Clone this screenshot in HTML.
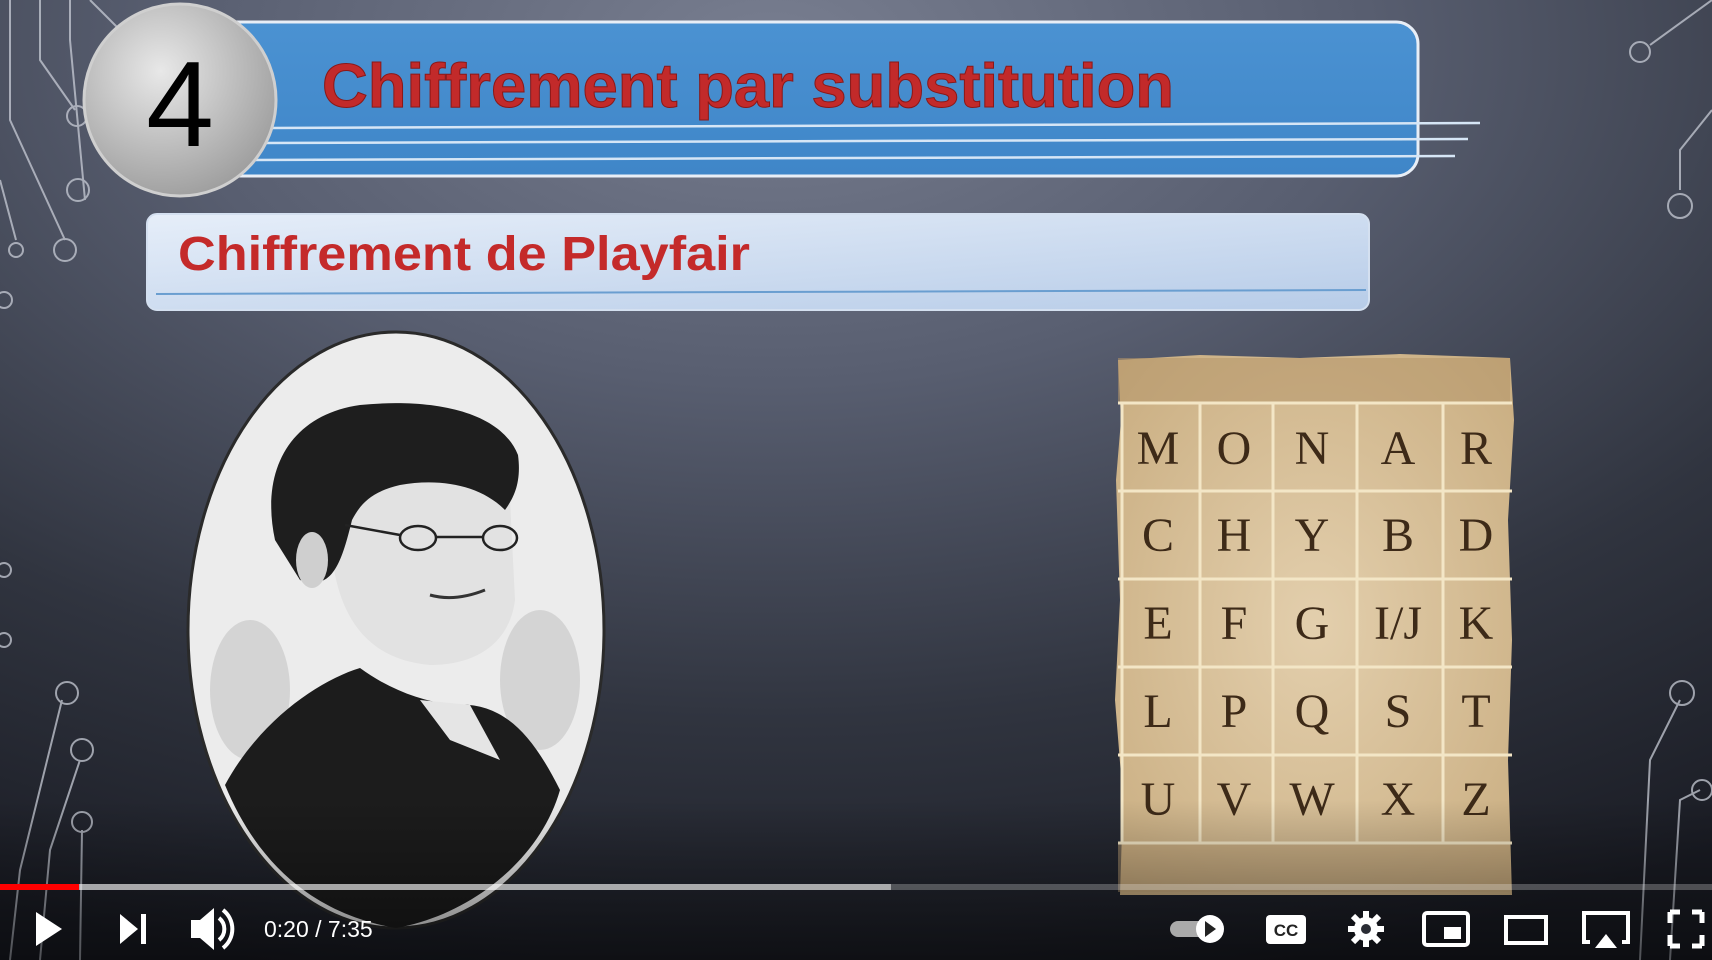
<!DOCTYPE html>
<html><head><meta charset="utf-8"><style>
html,body{margin:0;padding:0;width:1712px;height:960px;overflow:hidden;background:#3a3e4d}
svg{display:block}
</style></head><body>
<svg width="1712" height="960" viewBox="0 0 1712 960" xmlns="http://www.w3.org/2000/svg">
<defs>
<radialGradient id="bg" cx="0.45" cy="0.05" r="1.0">
<stop offset="0" stop-color="#787e90"/>
<stop offset="0.35" stop-color="#585e70"/>
<stop offset="0.7" stop-color="#30343f"/>
<stop offset="1" stop-color="#1a1c24"/>
</radialGradient>
<linearGradient id="blue" x1="0" y1="0" x2="0" y2="1">
<stop offset="0" stop-color="#4b92d2"/><stop offset="1" stop-color="#3f86c8"/>
</linearGradient>
<linearGradient id="sub" x1="0" y1="0" x2="1" y2="1">
<stop offset="0" stop-color="#e6eef9"/><stop offset="1" stop-color="#b7cce8"/>
</linearGradient>
<radialGradient id="circ" cx="0.4" cy="0.35" r="0.7">
<stop offset="0" stop-color="#e8e8e8"/><stop offset="1" stop-color="#9c9c9c"/>
</radialGradient>
<radialGradient id="parch" cx="0.5" cy="0.5" r="0.7">
<stop offset="0" stop-color="#e3cfad"/><stop offset="1" stop-color="#c9ad80"/>
</radialGradient>
<linearGradient id="ctrl" x1="0" y1="0" x2="0" y2="1">
<stop offset="0" stop-color="#000" stop-opacity="0"/><stop offset="1" stop-color="#000" stop-opacity="0.5"/>
</linearGradient>
</defs>
<rect width="1712" height="960" fill="url(#bg)"/>
<g stroke="#c8ccd6" stroke-width="2" fill="none" opacity="0.75">
<path d="M10 0 V120 L65 240"/><circle cx="65" cy="250" r="11"/>
<path d="M40 0 V60 L75 110"/><circle cx="77" cy="116" r="10"/>
<path d="M70 0 V40 L85 200"/><circle cx="78" cy="190" r="11"/>
<path d="M90 0 L120 30"/>
<path d="M0 180 L16 240"/><circle cx="16" cy="250" r="7"/>
<circle cx="4" cy="300" r="8"/>
<circle cx="4" cy="570" r="7"/><circle cx="4" cy="640" r="7"/>
<path d="M10 960 L20 870 L62 700"/><circle cx="67" cy="693" r="11"/>
<path d="M40 960 L50 850 L80 760"/><circle cx="82" cy="750" r="11"/>
<path d="M80 960 L82 830"/><circle cx="82" cy="822" r="10"/>
<path d="M1712 0 L1650 45"/><circle cx="1640" cy="52" r="10"/>
<path d="M1712 110 L1680 150 V190"/><circle cx="1680" cy="206" r="12"/>
<path d="M1640 960 L1650 760 L1680 700"/><circle cx="1682" cy="693" r="12"/>
<path d="M1670 960 L1680 800 L1700 790"/><circle cx="1702" cy="790" r="10"/>
</g>
<rect x="208" y="22" width="1210" height="154" rx="22" fill="url(#blue)" stroke="#e8eef6" stroke-width="3"/>
<g stroke="#d6e6f6" stroke-width="2.5">
<line x1="270" y1="128" x2="1480" y2="123"/>
<line x1="260" y1="143" x2="1468" y2="139"/>
<line x1="245" y1="160" x2="1455" y2="156"/>
</g>
<circle cx="180" cy="100" r="96" fill="url(#circ)" stroke="#cfcfcf" stroke-width="3"/>
<text x="180" y="146" font-family="Liberation Sans, sans-serif" font-size="122" fill="#000" text-anchor="middle">4</text>
<text x="322" y="107" font-family="Liberation Sans, sans-serif" font-weight="bold" font-size="62" fill="#c22a2a" stroke="#8a1818" stroke-width="1" textLength="852" lengthAdjust="spacingAndGlyphs">Chiffrement par substitution</text>
<rect x="147" y="214" width="1222" height="96" rx="10" fill="url(#sub)" stroke="#d4e0f0" stroke-width="2"/>
<line x1="156" y1="294" x2="1366" y2="290" stroke="#6a9ed0" stroke-width="2"/>
<text x="178" y="270" font-family="Liberation Sans, sans-serif" font-weight="bold" font-size="48" fill="#c42a2a" textLength="572" lengthAdjust="spacingAndGlyphs">Chiffrement de Playfair</text>
<ellipse cx="396" cy="630" rx="208" ry="298" fill="#ececec" stroke="#2a2a2a" stroke-width="3"/>
<ellipse cx="250" cy="690" rx="40" ry="70" fill="#c4c4c4" opacity="0.6"/>
<ellipse cx="540" cy="680" rx="40" ry="70" fill="#c4c4c4" opacity="0.6"/>
<path d="M330 520 C330 620 370 660 430 665 C480 665 510 640 515 600 L510 500 C480 470 410 470 370 480 C345 490 335 505 330 520 Z" fill="#e2e2e2"/>
<path d="M275 540 C260 470 290 415 360 405 C430 398 500 410 518 455 C522 485 512 500 505 510 C480 485 440 478 400 485 C370 492 360 505 352 520 C340 570 330 590 300 580 Z" fill="#1e1e1e"/>
<ellipse cx="312" cy="560" rx="16" ry="28" fill="#cfcfcf"/>
<g stroke="#222" stroke-width="2.5" fill="none"><ellipse cx="418" cy="538" rx="18" ry="12"/><ellipse cx="500" cy="538" rx="17" ry="12"/><path d="M345 525 L400 535 M436 537 L483 537"/></g>
<path d="M430 595 Q455 602 485 590" stroke="#333" stroke-width="3" fill="none"/>
<path d="M225 785 C260 720 320 680 360 668 C390 690 420 700 450 705 C500 700 530 730 560 790 C540 860 470 915 396 928 C320 915 260 870 225 785 Z" fill="#1c1c1c"/>
<path d="M420 700 L470 705 L500 760 L450 740 Z" fill="#e5e5e5"/>
<path d="M1118 360 L1200 355 L1300 358 L1400 354 L1510 358 L1514 420 L1508 520 L1512 640 L1508 760 L1512 895 L1120 895 L1123 800 L1115 700 L1120 600 L1116 480 L1121 420 Z" fill="url(#parch)"/>
<rect x="1118" y="358" width="392" height="44" fill="#b5956a" opacity="0.55"/>
<rect x="1118" y="844" width="392" height="48" fill="#c4a679" opacity="0.5"/>
<g stroke="#f3e6c6" stroke-width="3">
<line x1="1118" y1="403" x2="1512" y2="403"/><line x1="1118" y1="491" x2="1512" y2="491"/>
<line x1="1118" y1="579" x2="1512" y2="579"/><line x1="1118" y1="667" x2="1512" y2="667"/>
<line x1="1118" y1="755" x2="1512" y2="755"/><line x1="1118" y1="843" x2="1512" y2="843"/>
<line x1="1122" y1="403" x2="1122" y2="843"/><line x1="1200" y1="403" x2="1200" y2="843"/>
<line x1="1273" y1="403" x2="1273" y2="843"/><line x1="1357" y1="403" x2="1357" y2="843"/>
<line x1="1443" y1="403" x2="1443" y2="843"/>
</g>
<g font-family="Liberation Serif, serif" font-size="48" fill="#3d2a18" text-anchor="middle">
<text x="1158" y="464">M</text><text x="1234" y="464">O</text><text x="1312" y="464">N</text><text x="1398" y="464">A</text><text x="1476" y="464">R</text>
<text x="1158" y="551">C</text><text x="1234" y="551">H</text><text x="1312" y="551">Y</text><text x="1398" y="551">B</text><text x="1476" y="551">D</text>
<text x="1158" y="639">E</text><text x="1234" y="639">F</text><text x="1312" y="639">G</text><text x="1398" y="639">I/J</text><text x="1476" y="639">K</text>
<text x="1158" y="727">L</text><text x="1234" y="727">P</text><text x="1312" y="727">Q</text><text x="1398" y="727">S</text><text x="1476" y="727">T</text>
<text x="1158" y="815">U</text><text x="1234" y="815">V</text><text x="1312" y="815">W</text><text x="1398" y="815">X</text><text x="1476" y="815">Z</text>
</g>
<rect y="800" width="1712" height="160" fill="url(#ctrl)"/>
<rect x="0" y="884" width="1712" height="6" fill="#ffffff" opacity="0.25"/>
<rect x="0" y="884" width="891" height="6" fill="#ffffff" opacity="0.5"/>
<rect x="0" y="884" width="79" height="6" fill="#f00"/>
<g fill="#fff">
<path d="M36 912 L62 929 L36 946 Z"/>
<path d="M120 914 L138 929 L120 944 Z"/><rect x="141" y="914" width="5" height="30"/>
<path d="M191 920 H200 L214 908 V950 L200 938 H191 Z"/>
<path d="M219 918 A14 14 0 0 1 219 940" stroke="#fff" stroke-width="4" fill="none"/>
<path d="M223 910 A24 24 0 0 1 223 948" stroke="#fff" stroke-width="4" fill="none"/>
<text x="264" y="937" font-family="Liberation Sans, sans-serif" font-size="23">0:20 / 7:35</text>
<rect x="1170" y="921" width="36" height="16" rx="8" fill="#aaa"/>
<circle cx="1210" cy="929" r="14"/><path d="M1205 921 L1216 929 L1205 937 Z" fill="#222"/>
<rect x="1266" y="915" width="40" height="29" rx="4"/>
<text x="1286" y="936" font-family="Liberation Sans, sans-serif" font-weight="bold" font-size="17" fill="#222" text-anchor="middle">CC</text>
<circle cx="1366" cy="929" r="12"/>
<g stroke="#fff" stroke-width="6"><line x1="1366" y1="911" x2="1366" y2="947"/><line x1="1348" y1="929" x2="1384" y2="929"/><line x1="1353" y1="916" x2="1379" y2="942"/><line x1="1379" y1="916" x2="1353" y2="942"/></g>
<circle cx="1366" cy="929" r="5" fill="#2a2c34"/>
<rect x="1424" y="913" width="44" height="32" rx="3" fill="none" stroke="#fff" stroke-width="4"/><rect x="1444" y="927" width="17" height="12"/>
<rect x="1506" y="917" width="40" height="26" fill="none" stroke="#fff" stroke-width="4"/>
<path d="M1590 942 H1584 V913 H1628 V942 H1622" fill="none" stroke="#fff" stroke-width="4"/><path d="M1595 948 L1606 934 L1617 948 Z"/>
<path d="M1670 912 H1680 M1670 912 V923 M1702 912 H1692 M1702 912 V923 M1670 946 H1680 M1670 946 V935 M1702 946 H1692 M1702 946 V935" stroke="#fff" stroke-width="5" fill="none"/>
</g>
</svg>
</body></html>
